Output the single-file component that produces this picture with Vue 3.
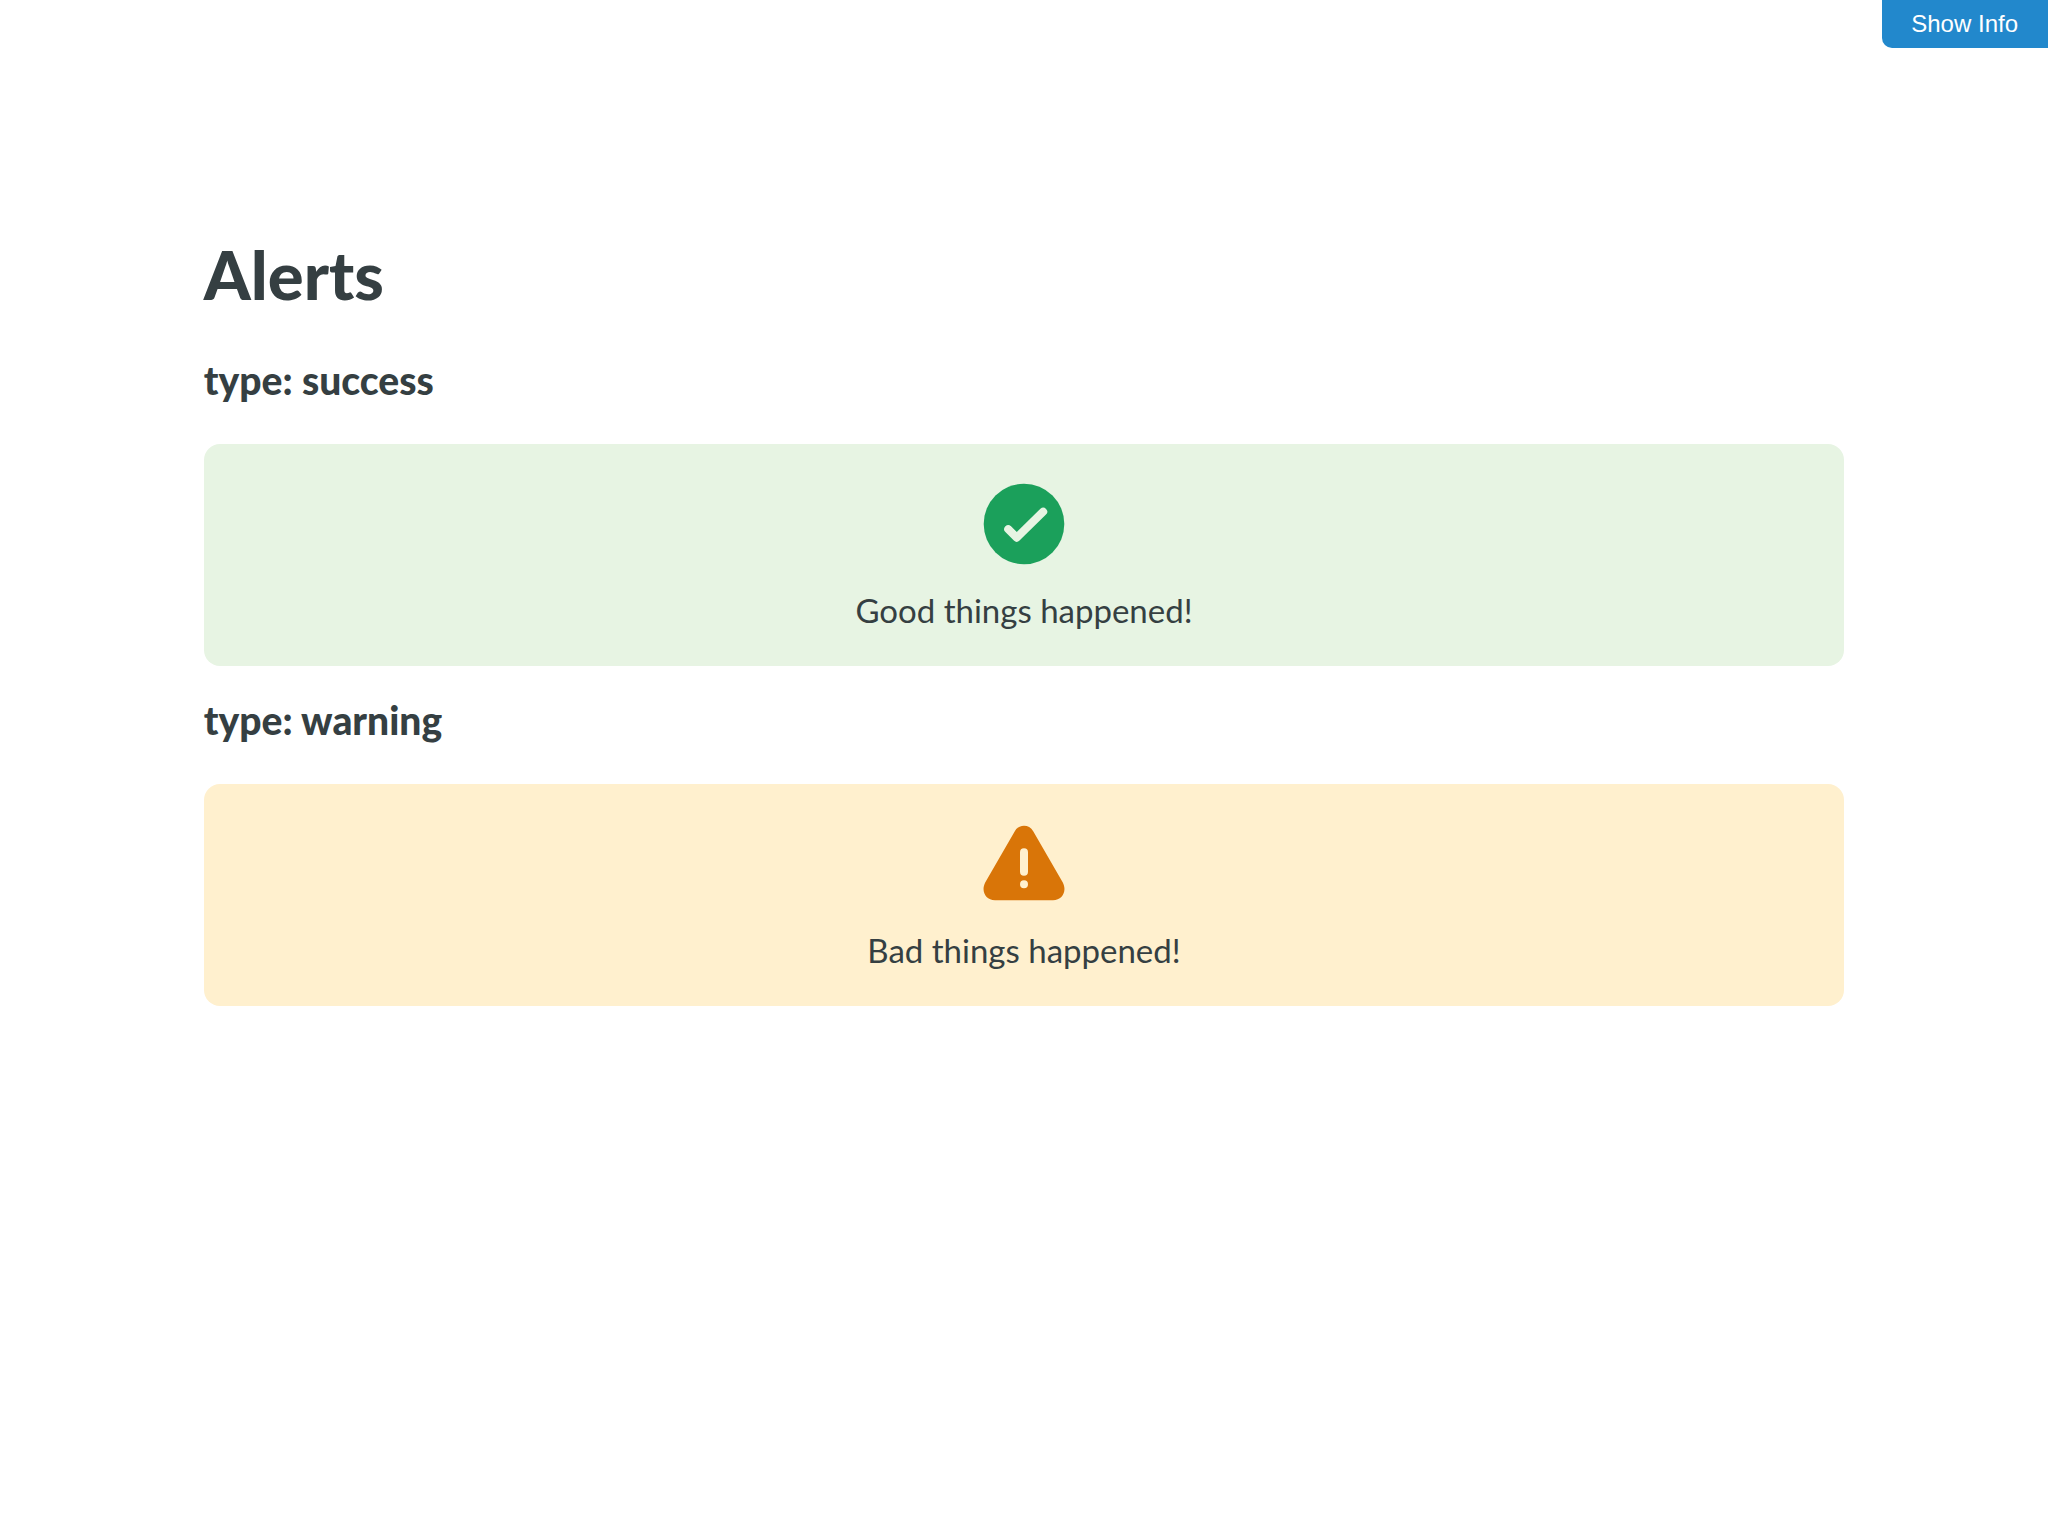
<script setup>
const alerts = [
  { type: 'success', message: 'Good things happened!' },
  { type: 'warning', message: 'Bad things happened!' }
]
</script>

<template>
  <button class="info-toggle" type="button">Show Info</button>
  <main class="page">
    <h1>Alerts</h1>
    <section v-for="alert in alerts" :key="alert.type">
      <h2>type: {{ alert.type }}</h2>
      <div class="alert" :class="alert.type" role="alert">
        <svg v-if="alert.type === 'success'" class="icon" viewBox="0 0 96 96" aria-hidden="true">
          <circle cx="48" cy="48" r="40.3" fill="currentColor" />
          <path class="mark" d="M32.2 53.2 40.7 61.7 67.2 35.7" />
        </svg>
        <svg v-else class="icon" viewBox="0 0 96 96" aria-hidden="true">
          <path
            fill="currentColor"
            d="M38.8 15.2C42.9 7.9 53.1 7.9 57.2 15.2L86.8 66.4C91.2 75.2 86.5 84.3 77 84.3H19C9.5 84.3 4.8 75.2 9.2 66.4Z"
          />
          <path class="mark" d="M48 36.2V55.8M48 68.2V68.3" />
        </svg>
        <p>{{ alert.message }}</p>
      </div>
    </section>
  </main>
</template>

<style>
body {
  margin: 0;
  background: #fff;
}
</style>

<style scoped>
.page {
  padding: 230px calc(10% - 1px) 64px;
  color: #353f42;
  font-family: Lato, "Liberation Sans", sans-serif;
}

h1 {
  margin: 0 0 32px;
  font-size: 67px;
  line-height: 88px;
  font-weight: 900;
}

h2 {
  margin: 0;
  padding: 30px 0 40px;
  font-size: 39px;
  line-height: 48px;
  font-weight: 900;
}

h1 + section h2 {
  padding-top: 6px;
}

.alert {
  display: flex;
  flex-direction: column;
  align-items: center;
  gap: 14px;
  padding: 32px;
  border-radius: 16px;
}

.alert p {
  margin: 0;
  font-size: 33px;
  line-height: 48px;
}

.success {
  background: #e7f4e3;
}

.warning {
  background: #fff0ce;
}

.icon {
  width: 96px;
  height: 96px;
}

.success .icon {
  color: #1ba05b;
}

.warning .icon {
  color: #d97508;
}

.mark {
  fill: none;
  stroke: #e7f4e3;
  stroke-width: 8;
  stroke-linecap: round;
  stroke-linejoin: round;
}

.warning .mark {
  stroke: #fff0ce;
}

.info-toggle {
  position: absolute;
  top: 0;
  right: 0;
  height: 48px;
  padding: 0 30px 0 29px;
  border: 0;
  border-radius: 0 0 0 10px;
  background: #2288cc;
  color: #fff;
  font: 24px "Liberation Sans", Arial, sans-serif;
}
</style>
